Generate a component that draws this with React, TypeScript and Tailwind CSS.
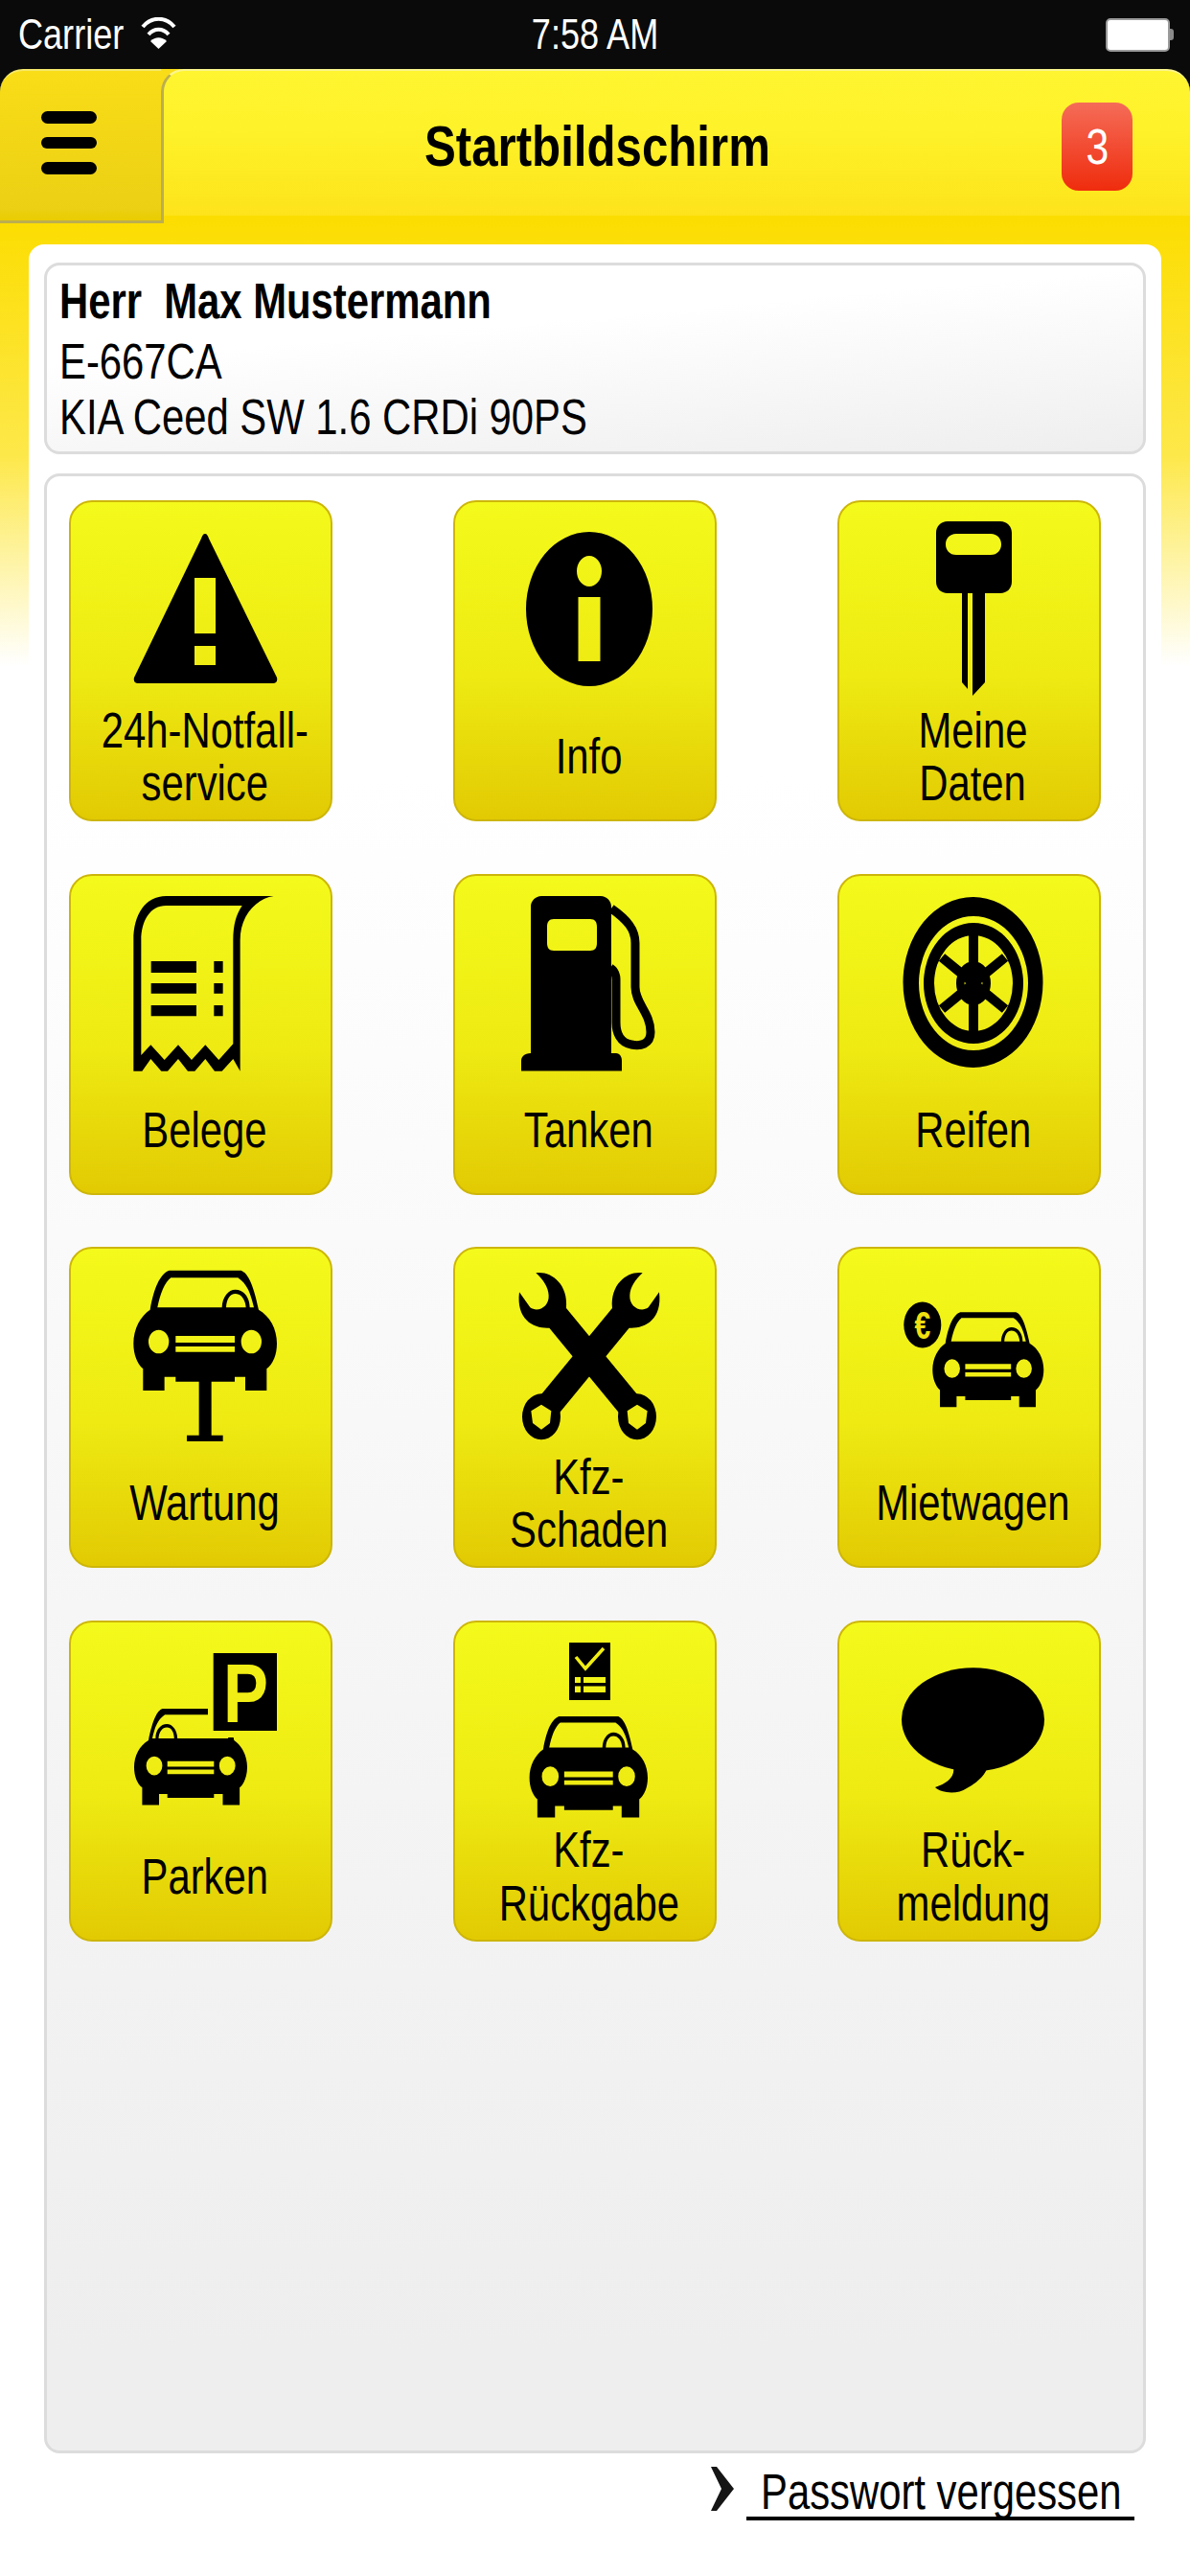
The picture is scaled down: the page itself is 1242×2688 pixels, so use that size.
import React from "react";

const CAR =
  "M140 32 L365 32 C385 40 402 70 420 155 C455 175 477 215 477 260 C477 295 465 325 445 340 L445 408 L378 408 L378 365 L345 365 L345 380 L160 380 L160 365 L125 365 L125 408 L58 408 L58 340 C40 325 28 295 28 260 C28 215 50 175 80 155 C95 70 118 40 140 32 Z " +
  "M103 148 L405 148 C395 105 385 75 355 55 L145 55 C125 70 112 105 103 148 Z " +
  "M305 148 C306 115 325 92 347 92 C372 92 392 115 392 148 L380 148 C378 122 365 105 347 105 C330 105 319 122 318 148 Z " +
  "M75 255 a32 37 0 1 0 64 0 a32 37 0 1 0 -64 0 Z M365 255 a32 37 0 1 0 64 0 a32 37 0 1 0 -64 0 Z " +
  "M160 237 H345 V258 H160 Z M160 270 H345 V287 H160 Z";

const Car = ({ x, y, w, h, flip }: { x: number; y: number; w: number; h: number; flip?: boolean }) => {
  const sx = w / 449;
  const sy = h / 376;
  const t = flip
    ? `translate(${x + w} ${y}) scale(${-sx} ${sy}) translate(-28 -32)`
    : `translate(${x} ${y}) scale(${sx} ${sy}) translate(-28 -32)`;
  return <path transform={t} d={CAR} fillRule="evenodd" fill="#000" />;
};

const Wrench = () => (
  <g>
    <path d="M88 40 C130 32 190 70 183 150 L405 420 L350 480 L130 212 C85 215 25 190 36 100 L70 148 C95 165 130 145 128 110 C127 85 110 60 88 40 Z" />
    <path
      fillRule="evenodd"
      d="M345 490 a60 72 0 1 0 120 0 a60 72 0 1 0 -120 0 Z M405 452 L437 472 L432 510 L405 530 L378 510 L374 472 Z"
    />
  </g>
);

const icons: Record<string, React.ReactNode> = {
  warn: (
    <path
      fillRule="evenodd"
      d="M142 35 C144 35 145 37 146 40 L217 185 C218 189 216 191 213 191 L72 191 C69 191 67 189 68 185 L138 40 C139 37 140 35 142 35 Z M131 81 V139 H153 V81 Z M131 152 V172 H153 V152 Z"
    />
  ),
  info: (
    <path
      fillRule="evenodd"
      d="M76 113.5 a66 80.5 0 1 0 132 0 a66 80.5 0 1 0 -132 0 Z M129 74 a13 16 0 1 0 26 0 a13 16 0 1 0 -26 0 Z M130.5 101 H153.5 V168 H130.5 Z"
    />
  ),
  key: (
    <g>
      <path
        fillRule="evenodd"
        d="M115 22 H170 C177 22 182 27 182 34 V85 C182 92 177 97 170 97 H115 C108 97 103 92 103 85 V34 C103 27 108 22 115 22 Z M124 35 C117 35 113 40 113 46 C113 52 117 57 124 57 H160 C167 57 171 52 171 46 C171 40 167 35 160 35 Z"
      />
      <path d="M130 95 H136 V197 L130 190 Z M141 95 H154 V190 L141 204 Z" />
    </g>
  ),
  receipt: (
    <g transform="translate(48 9) scale(0.3333)">
      <path
        fillRule="evenodd"
        d="M58 590 L58 180 C58 100 95 42 160 42 L497 42 C445 50 392 100 392 180 L392 590 L370 552 L335 590 L312 590 L283 552 L250 590 L228 590 L198 552 L165 590 L145 590 L112 552 L85 590 Z M82 540 L112 508 L155 555 L198 508 L240 555 L283 508 L325 555 L370 505 L370 180 C370 130 380 100 398 72 L160 72 C110 72 82 120 82 180 Z"
      />
      <path d="M113 246 H255 V282 H113 Z M113 315 H255 V347 H113 Z M113 384 H255 V418 H113 Z M310 246 H338 V282 H310 Z M310 315 H338 V347 H310 Z M310 384 H338 V418 H310 Z" />
    </g>
  ),
  pump: (
    <g>
      <path
        fillRule="evenodd"
        d="M92 23 H154 C160 23 165 28 165 34 V187 H170 C174 187 176 191 176 195 V205.500 H71 V195 C71 191 74 187 81 187 V34 C81 28 86 23 92 23 Z M105 47 C100 47 98 50 98 55 V72 C98 77 100 80 105 80 H143 C148 80 150 77 150 72 V55 C150 50 148 47 143 47 Z"
      />
      <path
        d="M165 36 C182 48 190 58 190 72 V118 C190 135 206 145 206 165 C206 178 195 180 186 178 C174 176 170 165 170 155 V110 C170 104 167 100 164 98"
        fill="none"
        stroke="#000"
        strokeWidth="9"
      />
    </g>
  ),
  tire: (
    <g>
      <path
        fillRule="evenodd"
        d="M68.500 113 a73 89 0 1 0 146 0 a73 89 0 1 0 -146 0 Z M85 114 a57 70 0 1 0 114 0 a57 70 0 1 0 -114 0 Z"
      />
      <path
        fillRule="evenodd"
        d="M90 114 a52 63 0 1 0 104 0 a52 63 0 1 0 -104 0 Z M101 114 a41 50 0 1 0 82 0 a41 50 0 1 0 -82 0 Z"
      />
      <path d="M142 60 V168 M109 87 L175 141 M175 87 L109 141" stroke="#000" strokeWidth="10" fill="none" />
      <path
        fillRule="evenodd"
        d="M124 114 a18 23 0 1 0 36 0 a18 23 0 1 0 -36 0 Z M132.500 114 a9.500 11.500 0 1 0 19 0 a9.500 11.500 0 1 0 -19 0 Z"
      />
    </g>
  ),
  lift: (
    <g>
      <Car x={67.300} y={24.700} w={149.700} h={125.300} />
      <g transform="translate(58 14) scale(0.3333)">
        <path d="M233 370 H272 V548 H308 V567 H195 V548 H233 Z" />
      </g>
    </g>
  ),
  tools: (
    <g transform="translate(57 14) scale(0.3333)">
      <Wrench />
      <g transform="translate(510 0) scale(-1 1)">
        <Wrench />
      </g>
    </g>
  ),
  rent: (
    <g>
      <Car x={99.300} y={68.300} w={116} h={99} />
      <ellipse cx="88.800" cy="81.500" rx="19.500" ry="24" />
      <text
        x="0"
        y="0"
        transform="translate(80.500 95.500) scale(0.75 1)"
        fill="#f0e010"
        fontSize="40"
        fontWeight="700"
        fontFamily="'Liberation Sans', sans-serif"
      >
        €
      </text>
    </g>
  ),
  park: (
    <g>
      <clipPath id="parkclip">
        <rect x="0" y="0" width="145" height="300" />
        <rect x="0" y="122" width="300" height="200" />
      </clipPath>
      <g clipPath="url(#parkclip)">
        <Car x={68} y={92} w={118} h={100.500} flip />
      </g>
      <rect x="150.700" y="34" width="66.300" height="81" />
      <text
        x="0"
        y="0"
        transform="translate(161 106) scale(0.8 1)"
        fill="#f0ee14"
        fontSize="88"
        fontWeight="700"
        fontFamily="'Liberation Sans', sans-serif"
      >
        P
      </text>
    </g>
  ),
  ret: (
    <g>
      <path
        fillRule="evenodd"
        d="M121 23 H164 V83 H121 Z M127 59 V65 H133 V59 Z M136 59 V65 H159 V59 Z M127 68.500 V75 H133 V68.500 Z M136 68.500 V75 H159 V68.500 Z"
      />
      <path d="M128 38 L138 50 L157 29" fill="none" stroke="#f0ee14" strokeWidth="3.500" />
      <Car x={79.600} y={100} w={123.400} h={105.600} />
    </g>
  ),
  bubble: (
    <g>
      <ellipse cx="141.500" cy="103.300" rx="74.500" ry="54" />
      <path d="M120 150 C125 162 115 170 102 174 C108 180 125 182 135 175 C148 168 155 160 158 150 Z" />
    </g>
  ),
};

const tiles: { icon: string; label: string[] }[] = [
  { icon: "warn", label: ["24h-Notfall-", "service"] },
  { icon: "info", label: ["Info"] },
  { icon: "key", label: ["Meine", "Daten"] },
  { icon: "receipt", label: ["Belege"] },
  { icon: "pump", label: ["Tanken"] },
  { icon: "tire", label: ["Reifen"] },
  { icon: "lift", label: ["Wartung"] },
  { icon: "tools", label: ["Kfz-", "Schaden"] },
  { icon: "rent", label: ["Mietwagen"] },
  { icon: "park", label: ["Parken"] },
  { icon: "ret", label: ["Kfz-", "Rückgabe"] },
  { icon: "bubble", label: ["Rück-", "meldung"] },
];

const Tile = ({ icon, label }: { icon: string; label: string[] }) => (
  <div className="w-[275px] h-[335px] rounded-[24px] border-2 border-[#cdb60a] bg-[linear-gradient(180deg,#f4fa1b_0%,#eeea12_55%,#e2ca03_100%)]">
    <svg width="271" height="210" viewBox="2 2 271 210" className="block" fill="#000">
      {icons[icon]}
    </svg>
    <div className="h-[110px] pl-2 mt-[1px] flex flex-col items-center justify-center text-center text-[51px] leading-[55.5px] text-black">
      {label.map((l) => (
        <div key={l} className="whitespace-nowrap scale-x-[0.82]">
          {l}
        </div>
      ))}
    </div>
  </div>
);

export default function App() {
  return (
    <div className="w-[1242px] h-[2688px] flex flex-col overflow-hidden bg-[#0a0a0a] font-['Liberation_Sans',sans-serif] text-black">
      {/* status bar */}
      <div className="h-[72px] shrink-0 grid grid-cols-3 items-center text-white text-[44px] leading-none">
        <div className="flex items-center pl-[19px]">
          <span className="inline-block w-[111px] whitespace-nowrap origin-left scale-x-[0.82]">Carrier</span>
          <svg width="37" height="33" viewBox="0 0 37 33" className="ml-[17px] -mt-[3px]" fill="none" stroke="#fff" strokeWidth="4">
            <path d="M2 10 C11 -1 26 -1 35 10" />
            <path d="M8 18 C14 11 23 11 29 18" />
            <path d="M10 25 C15 20 22 20 27 25 L18.500 33 Z" fill="#fff" stroke="none" />
          </svg>
        </div>
        <div className="text-center whitespace-nowrap scale-x-[0.82]">7:58 AM</div>
        <div className="flex justify-end items-center pr-[17px]">
          <div className="w-[67px] h-[35px] rounded-[5px] border-2 border-[#9a9a9a] bg-white" />
          <div className="w-[4px] h-[12px] rounded-r-[3px] bg-[#8a8a8a]" />
        </div>
      </div>

      {/* header */}
      <div className="flex h-[153px] shrink-0 items-start">
        <div className="relative z-10 w-[171px] h-[161px] shrink-0 rounded-tl-[24px] border-t-2 border-t-[#f6e86a] border-r-[3px] border-r-[#bcae50] border-b-[3px] border-b-[#bcae50] bg-[linear-gradient(180deg,#f9dd18_0%,#ebd014_92%,#e9cc00_100%)] pl-[43px] pt-[42px] flex flex-col gap-[14px]">
          <div className="absolute left-full -top-[2px] w-[30px] h-[30px] bg-[#f9dd18]" />
          <div className="w-[58px] h-[13px] rounded-full bg-black" />
          <div className="w-[58px] h-[12px] rounded-full bg-black" />
          <div className="w-[58px] h-[13px] rounded-full bg-black" />
        </div>
        <div className="relative z-20 -ml-[3px] flex-1 h-[153px] rounded-t-[24px] border-t-2 border-t-[#fbf58e] border-l-[3px] border-l-[#bcae50] bg-[linear-gradient(180deg,#fff530_0%,#fef22a_40%,#fde31b_100%)] flex items-center justify-between pl-[272px] pr-[60px]">
          <div className="text-[60px] leading-none font-bold mt-[7px] whitespace-nowrap origin-left scale-x-[0.82]">Startbildschirm</div>
          <div className="w-[74px] h-[92px] mt-[6px] rounded-[18px] bg-[linear-gradient(180deg,#f56c58_0%,#ef2c0d_100%)] flex items-center justify-center text-white text-[52px] leading-none">
            <span className="scale-x-[0.82]">3</span>
          </div>
        </div>
      </div>

      {/* body */}
      <div className="flex-1 px-[30px] pt-[30px] bg-[linear-gradient(180deg,#fcdd00_0px,#fde84a_250px,#ffffff_470px)]">
        <div className="h-full bg-white rounded-t-[16px] px-[16px] pt-[19px]">
          <div className="h-[200px] rounded-[16px] border-[3px] border-[#dcdcdc] bg-[linear-gradient(175deg,#ffffff_35%,#eeeeee_100%)] pl-[13px] pt-[9px] text-[51px] leading-[58px]">
            <div className="font-bold whitespace-pre origin-left scale-x-[0.82]">Herr  Max Mustermann</div>
            <div className="mt-[5px] origin-left scale-x-[0.82]">E-667CA</div>
            <div className="origin-left scale-x-[0.82]">KIA Ceed SW 1.6 CRDi 90PS</div>
          </div>

          <div className="mt-[20px] h-[2066px] rounded-[16px] border-[3px] border-[#dcdcdc] bg-[linear-gradient(180deg,#ffffff_15%,#eeeeee_95%)] pl-[23px] pt-[25px]">
            <div className="grid grid-cols-[275px_275px_275px] gap-x-[126px] gap-y-[54.5px]">
              {tiles.map((t) => (
                <Tile key={t.icon} icon={t.icon} label={t.label} />
              ))}
            </div>
          </div>

          <div className="flex justify-end items-start pr-[12px] pt-[14px]">
            <svg width="24" height="46" viewBox="0 0 24 46" className="mr-[13px]">
              <path d="M0 0 H6 L24 23 L6 46 H0 L11 23 Z" fill="#151515" />
            </svg>
            <div className="w-[405px] h-[56px] border-b-4 border-black px-[15px] text-[51px] leading-[54px] whitespace-nowrap">
              <div className="origin-left scale-x-[0.82]">Passwort vergessen</div>
            </div>
          </div>
        </div>
      </div>
    </div>
  );
}
